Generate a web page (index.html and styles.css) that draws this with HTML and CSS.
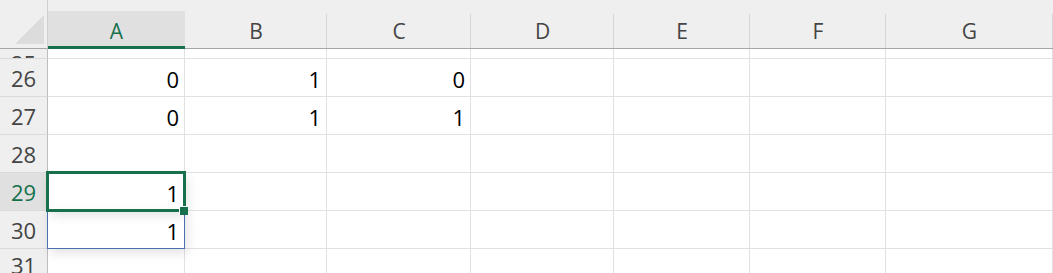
FILE: index.html
```html
<!DOCTYPE html>
<html>

<head>
    <title>Sheet1</title>
    <link rel="stylesheet" href="styles.css">
</head>

<body>
    <div class="sheet">
        <!-- column headers -->
        <div class="corner"><span class="tri"></span></div>
        <div class="colhead active">A</div>
        <div class="colhead">B</div>
        <div class="colhead">C</div>
        <div class="colhead">D</div>
        <div class="colhead">E</div>
        <div class="colhead">F</div>
        <div class="colhead">G</div>

        <!-- row 25, mostly scrolled away -->
        <div class="rowhead part-top"><span>25</span></div>
        <div class="cell"></div><div class="cell"></div><div class="cell"></div><div class="cell"></div><div class="cell"></div><div class="cell"></div><div class="cell"></div>

        <div class="rowhead">26</div>
        <div class="cell">0</div><div class="cell">1</div><div class="cell">0</div><div class="cell"></div><div class="cell"></div><div class="cell"></div><div class="cell"></div>

        <div class="rowhead">27</div>
        <div class="cell">0</div><div class="cell">1</div><div class="cell">1</div><div class="cell"></div><div class="cell"></div><div class="cell"></div><div class="cell"></div>

        <div class="rowhead">28</div>
        <div class="cell"></div><div class="cell"></div><div class="cell"></div><div class="cell"></div><div class="cell"></div><div class="cell"></div><div class="cell"></div>

        <div class="rowhead active">29</div>
        <div class="cell selected">1
            <span class="selbox"></span>
            <span class="handle"></span>
        </div>
        <div class="cell"></div><div class="cell"></div><div class="cell"></div><div class="cell"></div><div class="cell"></div><div class="cell"></div>

        <div class="rowhead">30</div>
        <div class="cell ranged">1<span class="rangebox"></span></div>
        <div class="cell"></div><div class="cell"></div><div class="cell"></div><div class="cell"></div><div class="cell"></div><div class="cell"></div>

        <!-- row 31, cut off at the bottom -->
        <div class="rowhead part-bottom">31</div>
        <div class="cell"></div><div class="cell"></div><div class="cell"></div><div class="cell"></div><div class="cell"></div><div class="cell"></div><div class="cell"></div>
    </div>
</body>

</html>
```

FILE: styles.css
```css
html,
body {
    margin: 0;
    height: 100%;
    overflow: hidden;
}

body {
    background-color: #ffffff;
    font-family: "Open Sans", "Noto Sans", sans-serif;
}

.sheet {
    display: grid;
    grid-template-columns: 48px 137px 142px 144px 143px 136px 136px 1fr;
    grid-template-rows: 49px 10px repeat(5, 38px) 1fr;
    height: 100%;
    background-color: #ffffff;
}

.corner {
    background-color: #efefef;
    border-bottom: 1px solid #a6a6a6;
    border-right: 1px solid #cfcfcf;
    position: relative;
}

.tri {
    position: absolute;
    left: 15px;
    top: 15px;
    width: 29px;
    height: 29px;
    background-color: #dcdcdc;
    clip-path: polygon(100% 0, 100% 100%, 0 100%);
}

.colhead {
    background-color: #efefef;
    background-image: linear-gradient(#d5d5d5, #d5d5d5);
    background-repeat: no-repeat;
    background-size: 1px 34px;
    background-position: right bottom;
    border-bottom: 1px solid #a6a6a6;
    color: #444444;
    font-size: 21px;
    display: flex;
    align-items: flex-end;
    justify-content: center;
    padding-bottom: 3px;
    box-sizing: border-box;
}

.colhead.active {
    background-color: #efefef;
    background-image: linear-gradient(#e0e0e0, #e0e0e0);
    background-size: 100% 35px;
    background-position: left bottom;
    color: #17704c;
    border-bottom: 3px solid #17704c;
    padding-bottom: 1px;
}

.rowhead {
    background-color: #efefef;
    border-right: 1px solid #bdbdbd;
    border-bottom: 1px solid #dadada;
    color: #444444;
    font-size: 22px;
    display: flex;
    align-items: center;
    justify-content: center;
    overflow: hidden;
}

.rowhead.active {
    background-color: #e0e0e0;
    color: #17704c;
}

.part-top {
    align-items: flex-end;
}

.part-top span {
    line-height: 1;
    margin-bottom: -16px;
}

.part-bottom {
    align-items: flex-start;
    border-bottom: none;
    line-height: 1;
    padding-top: 5px;
}

.cell {
    border-right: 1px solid #e1e1e1;
    border-bottom: 1px solid #e1e1e1;
    font-size: 22px;
    color: #000000;
    display: flex;
    align-items: flex-end;
    justify-content: flex-end;
    padding: 0 5px 1px 0;
    line-height: 1.4;
    position: relative;
}

.part-bottom ~ .cell {
    border-bottom: none;
}

.selected {
    z-index: 2;
    box-shadow: 2px 4px 12px rgba(0, 0, 0, 0.12);
}

.selbox {
    position: absolute;
    left: -2px;
    top: -2px;
    right: -2px;
    bottom: -2px;
    border: 3px solid #17704c;
}

.handle {
    position: absolute;
    right: -4px;
    bottom: -5px;
    width: 8px;
    height: 8px;
    background-color: #17704c;
    border-left: 1px solid #ffffff;
    border-top: 1px solid #ffffff;
}

.ranged {
    z-index: 1;
    box-shadow: 2px 4px 12px rgba(0, 0, 0, 0.12);
}

.rangebox {
    position: absolute;
    left: -1px;
    top: 0;
    right: -1px;
    bottom: -1px;
    border: 1px solid #4a6fb5;
    border-top: none;
}
```
